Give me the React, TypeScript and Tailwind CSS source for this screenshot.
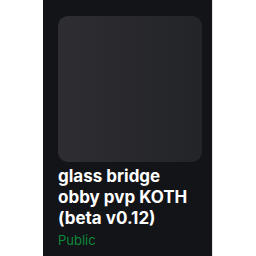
export default function App() {
  return (
    <div className="w-[256px] h-[256px] bg-white flex justify-start">
      <div className="ml-[43px] w-[170px] h-[256px] bg-[#131417] pl-[15px] pt-[16px] border-r border-[#e5e5e5]">
        <div className="w-[144px] h-[146px] rounded-[10px] bg-gradient-to-r from-[#2e2e32] to-[#232427]" />
        <div className="mt-[4px] text-white font-bold text-[17px] leading-[21px] font-['Inter','Open_Sans',sans-serif]">
          glass bridge
          <br />
          obby pvp KOTH
          <br />
          (beta v0.12)
        </div>
        <div className="mt-[3px] text-[#0c8a3c] text-[13px] leading-[16px] font-['Inter','Open_Sans',sans-serif]">
          Public
        </div>
      </div>
    </div>
  );
}
